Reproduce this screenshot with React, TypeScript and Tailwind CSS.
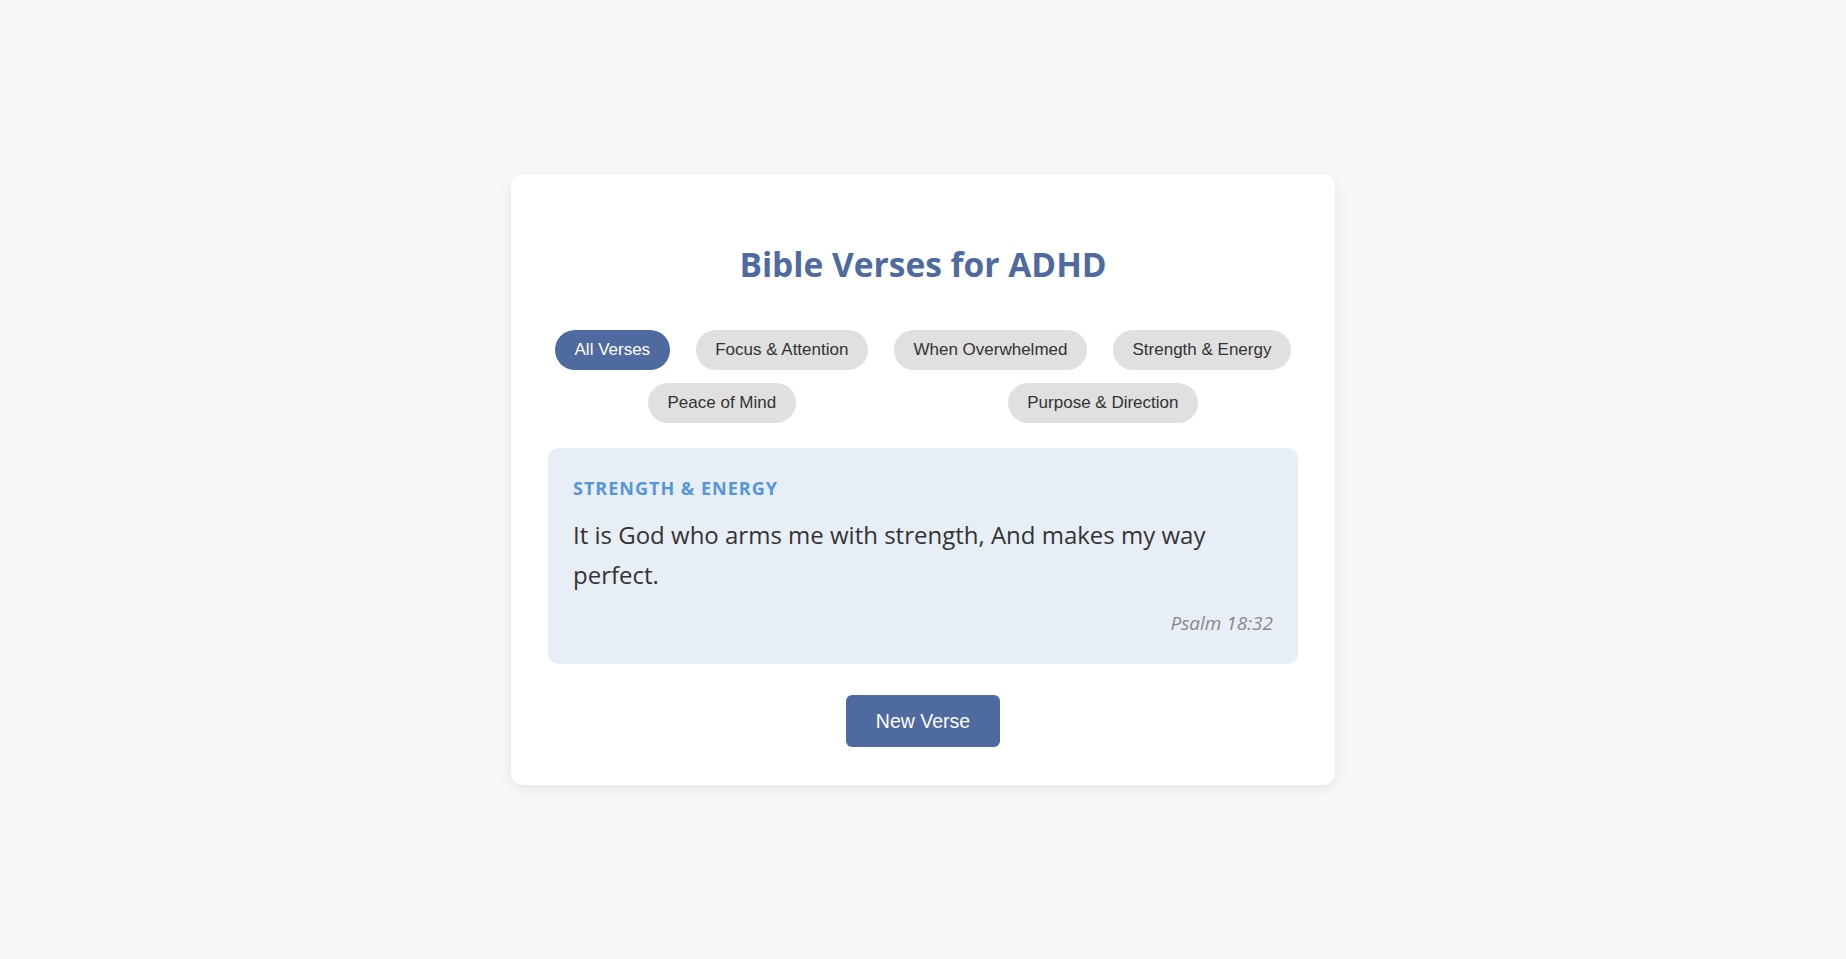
import { useState } from "react";

type Verse = {
  category: string;
  text: string;
  reference: string;
};

const categories = [
  "All Verses",
  "Focus & Attention",
  "When Overwhelmed",
  "Strength & Energy",
  "Peace of Mind",
  "Purpose & Direction",
];

const verses: Verse[] = [
  {
    category: "Strength & Energy",
    text: "It is God who arms me with strength, And makes my way perfect.",
    reference: "Psalm 18:32",
  },
  {
    category: "Peace of Mind",
    text: "You will keep in perfect peace those whose minds are steadfast, because they trust in you.",
    reference: "Isaiah 26:3",
  },
  {
    category: "Focus & Attention",
    text: "Let your eyes look straight ahead; fix your gaze directly before you.",
    reference: "Proverbs 4:25",
  },
];

const App = () => {
  const [selected, setSelected] = useState("All Verses");
  const [index, setIndex] = useState(0);
  const verse = verses[index];

  return (
    <div className="min-h-screen w-full bg-[#f7f8fa] flex items-center justify-center">
      <div className="w-[824px] bg-white rounded-[12px] shadow-[0_4px_14px_rgba(0,0,0,0.08)] px-[37px] pt-[70px] pb-[38px] flex flex-col">
        <h1 className="text-center text-[33.5px] leading-[40px] font-bold text-[#4f6a9f] font-['Open_Sans',sans-serif]">
          Bible Verses for ADHD
        </h1>

        <div className="mt-[46px] flex flex-wrap justify-around gap-x-3 gap-y-[13px]">
          {categories.map((cat) => (
            <button
              key={cat}
              onClick={() => setSelected(cat)}
              className={`rounded-full px-[19.5px] py-[10px] text-[17px] leading-[20px] font-['Liberation_Sans',Arial,sans-serif] ${
                selected === cat
                  ? "bg-[#4f6a9f] text-white"
                  : "bg-[#e0e0e0] text-[#333333]"
              }`}
            >
              {cat}
            </button>
          ))}
        </div>

        <div className="mt-[25px] rounded-[10px] bg-[#e8eef6] px-[25px] pt-[28px] pb-[27px] font-['Open_Sans',sans-serif]">
          <div className="text-[18px] leading-[24px] font-bold uppercase tracking-[1px] text-[#5596d8]">
            {verse.category}
          </div>
          <p className="mt-[15px] text-[24px] leading-[40px] text-[#333333]">
            {verse.text}
          </p>
          <div className="mt-[14px] text-right text-[19px] leading-[28px] italic text-[#888888]">
            {verse.reference}
          </div>
        </div>

        <div className="mt-[31px] flex justify-center">
          <button
            onClick={() => setIndex((i) => (i + 1) % verses.length)}
            className="rounded-[6px] bg-[#4f6a9f] px-[30px] py-[15px] text-[19.5px] leading-[22px] text-white font-['Liberation_Sans',Arial,sans-serif]"
          >
            New Verse
          </button>
        </div>
      </div>
    </div>
  );
};

export default App;
